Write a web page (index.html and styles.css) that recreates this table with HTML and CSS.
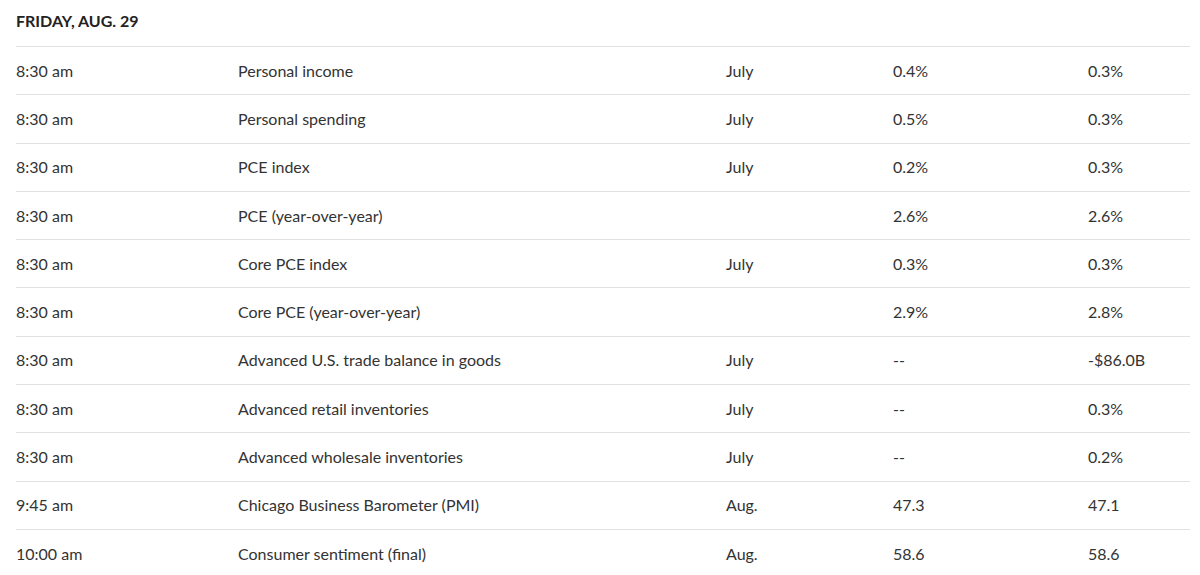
FILE: index.html
```html
<!DOCTYPE html>
<html>
<head>
<meta charset="utf-8">
<link rel="stylesheet" href="styles.css">
</head>
<body>
<div class="cal">
  <h2 class="day">FRIDAY, AUG. 29</h2>
  <div class="table">
    <div class="row"><span>8:30 am</span><span>Personal income</span><span>July</span><span>0.4%</span><span>0.3%</span></div>
    <div class="row"><span>8:30 am</span><span>Personal spending</span><span>July</span><span>0.5%</span><span>0.3%</span></div>
    <div class="row"><span>8:30 am</span><span>PCE index</span><span>July</span><span>0.2%</span><span>0.3%</span></div>
    <div class="row"><span>8:30 am</span><span>PCE (year-over-year)</span><span></span><span>2.6%</span><span>2.6%</span></div>
    <div class="row"><span>8:30 am</span><span>Core PCE index</span><span>July</span><span>0.3%</span><span>0.3%</span></div>
    <div class="row"><span>8:30 am</span><span>Core PCE (year-over-year)</span><span></span><span>2.9%</span><span>2.8%</span></div>
    <div class="row"><span>8:30 am</span><span>Advanced U.S. trade balance in goods</span><span>July</span><span>--</span><span>-$86.0B</span></div>
    <div class="row"><span>8:30 am</span><span>Advanced retail inventories</span><span>July</span><span>--</span><span>0.3%</span></div>
    <div class="row"><span>8:30 am</span><span>Advanced wholesale inventories</span><span>July</span><span>--</span><span>0.2%</span></div>
    <div class="row"><span>9:45 am</span><span>Chicago Business Barometer (PMI)</span><span>Aug.</span><span>47.3</span><span>47.1</span></div>
    <div class="row"><span>10:00 am</span><span>Consumer sentiment (final)</span><span>Aug.</span><span>58.6</span><span>58.6</span></div>
  </div>
</div>
</body>
</html>
```

FILE: styles.css
```css
* { box-sizing: border-box; }
html, body { margin: 0; padding: 0; background: #fff; }
body {
  font-family: Lato, "Liberation Sans", sans-serif;
  color: #333;
  font-size: 16px;
}
.cal {
  padding: 0 10px 0 16px;
}
.day {
  margin: 0;
  height: 46px;
  padding-top: 11px;
  font-size: 16px;
  line-height: 20px;
  font-weight: 700;
  color: #222;
}
.table {
  border-top: 1px solid #e2e2e2;
}
.row {
  display: grid;
  grid-template-columns: 222px 488px 167px 195px 1fr;
  align-items: center;
  height: 48.3px;
  border-bottom: 1px solid #e2e2e2;
  line-height: 20px;
}
.row span { white-space: nowrap; }
```
